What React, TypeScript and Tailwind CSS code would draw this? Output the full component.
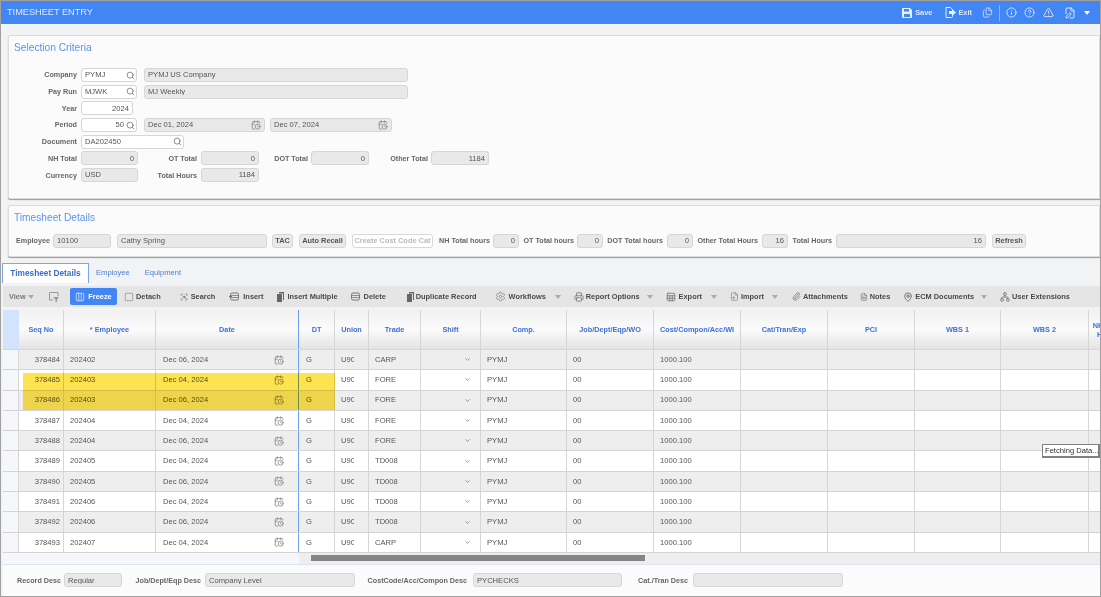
import React from 'react';
import {
  Files, Info, CircleHelp, TriangleAlert, FilePen, Search, CalendarClock, ChevronDown,
  Columns3, SquareDashed, ScanSearch, Settings, Printer, Sheet, FileInput, Paperclip, FileText,
  MapPin, Network,
} from 'lucide-react';

const Caret = ({ className = 'text-[#999]' }: { className?: string }) => (
  <svg width="6" height="4" viewBox="0 0 6 4" className={`shrink-0 ${className}`}>
    <path d="M0 0h6L3 4z" fill="currentColor" />
  </svg>
);

const SaveSolid = () => (
  <svg width="10" height="10" viewBox="0 0 10 10" className="shrink-0">
    <path d="M0 1a1 1 0 0 1 1-1h7l2 2v7a1 1 0 0 1-1 1H1a1 1 0 0 1-1-1z" fill="#e6efff" />
    <path d="M2 1h5v2.500H2zM2 6h6v3H2z" fill="#4286f4" />
  </svg>
);

const ExitDoc = () => (
  <svg width="11" height="11" viewBox="0 0 11 11" className="shrink-0">
    <path d="M1 .5h4.500L7.500 2.500V9.500a1 1 0 0 1-1 1H1z" fill="none" stroke="#e6efff" />
    <path d="M4 4h3V2l4 3.500-4 3.500V7H4z" fill="#e6efff" />
  </svg>
);

const FilterBox = () => (
  <svg width="10" height="10" viewBox="0 0 10 10" className="shrink-0 ml-[15px] text-[#999]">
    <path d="M9 4V.5H.5V8H4" fill="none" stroke="currentColor" />
    <path d="M4 5h6L8 7.500V10H6.500V7.500z" fill="currentColor" />
  </svg>
);

// row insert / delete glyph from the toolbar
const RowIcon = ({ arrow }: { arrow?: boolean }) => (
  <svg width="10" height="9" viewBox="0 0 10 9" className="shrink-0 text-[#777]">
    <rect x="1.500" y="1" width="8" height="7" rx="1.500" fill="none" stroke="currentColor" />
    <path d="M1.500 3.500h8M1.500 5.500h8" stroke="currentColor" strokeWidth="0.8" />
    {arrow && <path d="M0 4.500h3" stroke="currentColor" strokeWidth="1.400" />}
  </svg>
);

const DocFilled = () => (
  <svg width="7" height="10" viewBox="0 0 7 10" className="shrink-0 text-[#666]">
    <path d="M2 0h5v8H6V1.500H2zM0 2h5v8H0z" fill="currentColor" />
  </svg>
);

const Label = ({ w, children }: { w: string; children: React.ReactNode }) => (
  <span className={`${w} shrink-0 text-right text-[7.2px] font-bold text-[#666] whitespace-nowrap`}>{children}</span>
);

const Field = ({
  w,
  value,
  right,
  light,
  icon,
  className = '',
}: {
  w: string;
  value?: string;
  right?: boolean;
  light?: boolean;
  icon?: 'search' | 'cal';
  className?: string;
}) => (
  <div
    className={`${w} ${className} h-[14px] shrink-0 flex items-center px-[3px] rounded-[3px] border border-[#d6d6d6] text-[#555] ${
      light ? 'bg-white' : 'bg-[#e9e9e9]'
    }`}
  >
    <span className={`flex-1 whitespace-nowrap overflow-hidden ${right ? 'text-right' : ''}`}>{value}</span>
    {icon === 'search' && <Search size={9} className="ml-[2px] -mr-[2px] shrink-0 text-[#777]" strokeWidth={2.2} />}
    {icon === 'cal' && <CalendarClock size={10} className="ml-[2px] shrink-0 text-[#888]" />}
  </div>
);

const Btn = ({ w, children, dim }: { w: string; children: React.ReactNode; dim?: boolean }) => (
  <div
    className={`${w} h-[14px] shrink-0 flex items-center justify-center rounded-[3px] border text-[7.4px] font-bold whitespace-nowrap ${
      dim ? 'bg-white border-[#d9d9d9] text-[#bbb]' : 'bg-[#eaeaea] border-[#d6d6d6] text-[#555]'
    }`}
  >
    {children}
  </div>
);

const tools = [
  { label: 'Detach', ml: 'ml-[7px]', gap: 'gap-[2px]', icon: <SquareDashed size={10} className="shrink-0 text-[#666]" /> },
  { label: 'Search', ml: 'ml-[19px]', gap: 'gap-[3px]', icon: <ScanSearch size={8} className="shrink-0 text-[#666]" /> },
  { label: 'Insert', ml: 'ml-[14px]', gap: 'gap-[4px]', icon: <RowIcon arrow /> },
  { label: 'Insert Multiple', ml: 'ml-[14px]', gap: 'gap-[3px]', icon: <DocFilled /> },
  { label: 'Delete', ml: 'ml-[12px]', gap: 'gap-[4px]', icon: <RowIcon /> },
  { label: 'Duplicate Record', ml: 'ml-[21px]', gap: 'gap-[2px]', icon: <DocFilled /> },
  { label: 'Workflows', ml: 'ml-[18px]', gap: 'gap-[3px]', icon: <Settings size={11} className="shrink-0 text-[#999]" />, caret: 'ml-[9px]' },
  { label: 'Report Options', ml: 'ml-[13px]', gap: 'gap-[2px]', icon: <Printer size={10} className="shrink-0 text-[#777]" />, caret: 'ml-[7px]' },
  { label: 'Export', ml: 'ml-[13px]', gap: 'gap-[3px]', icon: <Sheet size={10} className="shrink-0 text-[#777]" />, caret: 'ml-[9px]' },
  { label: 'Import', ml: 'ml-[13px]', gap: 'gap-[2px]', icon: <FileInput size={9} className="shrink-0 text-[#888]" />, caret: 'ml-[8px]' },
  { label: 'Attachments', ml: 'ml-[14px]', gap: 'gap-[2px]', icon: <Paperclip size={9} className="shrink-0 text-[#777]" /> },
  { label: 'Notes', ml: 'ml-[12px]', gap: 'gap-[2px]', icon: <FileText size={8} className="shrink-0 text-[#777]" /> },
  { label: 'ECM Documents', ml: 'ml-[13px]', gap: 'gap-[2px]', icon: <MapPin size={10} className="shrink-0 text-[#666]" />, caret: 'ml-[7px]' },
  { label: 'User Extensions', ml: 'ml-[13px]', gap: 'gap-[2px]', icon: <Network size={10} className="shrink-0 text-[#777]" /> },
];

const gridCols =
  'grid grid-cols-[16px_45px_92px_143px_36px_34px_52px_60px_86px_87px_87px_87px_87px_86px_88px_38px]';

const headers = [
  '', 'Seq No', '* Employee', 'Date', 'DT', 'Union', 'Trade', 'Shift', 'Comp.', 'Job/Dept/Eqp/WO',
  'Cost/Compon/Acc/WI', 'Cat/Tran/Exp', 'PCI', 'WBS 1', 'WBS 2', 'NH Total Hours',
];

const rows = [
  ['378484', '202402', 'Dec 06, 2024', 'CARP'],
  ['378485', '202403', 'Dec 04, 2024', 'FORE'],
  ['378486', '202403', 'Dec 06, 2024', 'FORE'],
  ['378487', '202404', 'Dec 04, 2024', 'FORE'],
  ['378488', '202404', 'Dec 06, 2024', 'FORE'],
  ['378489', '202405', 'Dec 04, 2024', 'TD008'],
  ['378490', '202405', 'Dec 06, 2024', 'TD008'],
  ['378491', '202406', 'Dec 04, 2024', 'TD008'],
  ['378492', '202406', 'Dec 06, 2024', 'TD008'],
  ['378493', '202407', 'Dec 04, 2024', 'CARP'],
];

const cell = 'flex items-center overflow-hidden border-r border-[#d6d6d6] whitespace-nowrap';

const App: React.FC = () => {
  return (
    <div className="relative w-[1101px] h-[597px] overflow-hidden flex flex-col bg-[#f2f3f4] border-t border-l border-r border-b border-[#a0a0a0] font-['Liberation_Sans',Arial,sans-serif] text-[7.6px] leading-none">
      {/* Title bar */}
      <div className="h-[23px] shrink-0 flex items-center bg-[#4286f4] text-white">
        <span className="ml-[6px] text-[9.2px] text-[#dbe8ff]">TIMESHEET ENTRY</span>
        <div className="ml-auto flex items-center text-[7.4px] font-bold text-[#dbe8ff]">
          <SaveSolid />
          <span className="ml-[3px]">Save</span>
          <span className="ml-[13px]"><ExitDoc /></span>
          <span className="ml-[2px]">Exit</span>
          <Files size={11} className="ml-[10px] text-[#c5d9fa]" />
          <div className="ml-[6px] w-px h-[16px] bg-[#8db5f8]" />
          <Info size={11} className="ml-[6px]" />
          <CircleHelp size={11} className="ml-[7px]" />
          <TriangleAlert size={11} className="ml-[8px]" />
          <FilePen size={12} className="ml-[10px]" />
          <Caret className="ml-[8px] mr-[10px] text-white" />
        </div>
      </div>

      {/* Selection Criteria */}
      <div className="ml-[7px] mt-[11px] h-[164px] shrink-0 bg-[#fbfbfb] border border-[#dcdcdc] rounded-l-[2px] shadow-[0_1px_1px_#999] pt-[5px]">
        <h2 className="ml-[5px] h-[14px] text-[10.2px] leading-[14px] text-[#5c93ee]">Selection Criteria</h2>
        <div className="mt-[13px] flex flex-col gap-y-[2.7px]">
          <div className="flex items-center">
            <Label w="w-[68px]">Company</Label>
            <Field w="w-[56px]" light value="PYMJ" icon="search" className="ml-[4px]" />
            <Field w="w-[264px]" value="PYMJ US Company" className="ml-[7px]" />
          </div>
          <div className="flex items-center">
            <Label w="w-[68px]">Pay Run</Label>
            <Field w="w-[56px]" light value="MJWK" icon="search" className="ml-[4px]" />
            <Field w="w-[264px]" value="MJ Weekly" className="ml-[7px]" />
          </div>
          <div className="flex items-center">
            <Label w="w-[68px]">Year</Label>
            <Field w="w-[52px]" light right value="2024" className="ml-[4px]" />
          </div>
          <div className="flex items-center">
            <Label w="w-[68px]">Period</Label>
            <Field w="w-[56px]" light right value="50" icon="search" className="ml-[4px]" />
            <Field w="w-[121px]" value="Dec 01, 2024" icon="cal" className="ml-[7px]" />
            <Field w="w-[122px]" value="Dec 07, 2024" icon="cal" className="ml-[5px]" />
          </div>
          <div className="flex items-center">
            <Label w="w-[68px]">Document</Label>
            <Field w="w-[103px]" light value="DA202450" icon="search" className="ml-[4px]" />
          </div>
          <div className="flex items-center">
            <Label w="w-[68px]">NH Total</Label>
            <Field w="w-[57px]" right value="0" className="ml-[4px]" />
            <Label w="w-[59px]">OT Total</Label>
            <Field w="w-[58px]" right value="0" className="ml-[4px]" />
            <Label w="w-[49px]">DOT Total</Label>
            <Field w="w-[58px]" right value="0" className="ml-[3px]" />
            <Label w="w-[59px]">Other Total</Label>
            <Field w="w-[58px]" right value="1184" className="ml-[3px]" />
          </div>
          <div className="flex items-center">
            <Label w="w-[68px]">Currency</Label>
            <Field w="w-[57px]" value="USD" className="ml-[4px]" />
            <Label w="w-[59px]">Total Hours</Label>
            <Field w="w-[58px]" right value="1184" className="ml-[4px]" />
          </div>
        </div>
      </div>

      {/* Timesheet Details */}
      <div className="ml-[7px] mt-[6px] h-[52px] shrink-0 bg-[#fbfbfb] border border-[#dcdcdc] rounded-l-[2px] shadow-[0_1px_1px_#999] pt-[5px]">
        <h2 className="ml-[5px] h-[14px] text-[10.2px] leading-[14px] text-[#5c93ee]">Timesheet Details</h2>
        <div className="mt-[9px] flex items-center pl-[6px]">
          <Label w="w-[35px]">Employee</Label>
          <Field w="w-[58px]" value="10100" className="ml-[3px]" />
          <Field w="w-[150px]" value="Cathy Spring" className="ml-[6px]" />
          <div className="ml-[5px]"><Btn w="w-[21px]">TAC</Btn></div>
          <div className="ml-[6px]"><Btn w="w-[47px]">Auto Recall</Btn></div>
          <div className="ml-[6px]"><Btn w="w-[81px]" dim>Create Cost Code Cat</Btn></div>
          <Label w="w-[57px]">NH Total hours</Label>
          <Field w="w-[26px]" right value="0" className="ml-[3px]" />
          <Label w="w-[55px]">OT Total hours</Label>
          <Field w="w-[26px]" right value="0" className="ml-[3px]" />
          <Label w="w-[60px]">DOT Total hours</Label>
          <Field w="w-[26px]" right value="0" className="ml-[4px]" />
          <Label w="w-[65px]">Other Total Hours</Label>
          <Field w="w-[26px]" right value="16" className="ml-[4px]" />
          <Label w="w-[44px]">Total Hours</Label>
          <Field w="w-[150px]" right value="16" className="ml-[4px]" />
          <div className="ml-[6px]"><Btn w="w-[34px]">Refresh</Btn></div>
        </div>
      </div>

      {/* Tabs */}
      <div className="ml-[1px] mt-[6px] h-[20px] shrink-0 flex items-stretch text-[7.6px]">
        <div className="w-[87px] flex items-center justify-center bg-white border-t border-x border-[#7aa7ee] text-[8.3px] font-bold text-[#3a6fc8]">
          Timesheet Details
        </div>
        <span className="ml-[7px] flex items-center text-[#4a7fd4]">Employee</span>
        <span className="ml-[15px] flex items-center text-[#4a7fd4]">Equipment</span>
      </div>

      {/* Toolbar */}
      <div className="ml-[2px] mt-[3px] h-[21px] shrink-0 flex items-center bg-[#e5e5e5] text-[#4a4a4a] text-[7.4px] font-bold pl-[6px] whitespace-nowrap">
        <span className="shrink-0 w-[16px] text-[#777]">View</span>
        <Caret className="ml-[3px] text-[#aaa]" />
        <FilterBox />
        <div className="ml-[11px] w-[47px] h-[17px] shrink-0 flex items-center justify-center gap-[3px] rounded-[2px] bg-[#4286f4] text-white">
          <Columns3 size={10} className="shrink-0 text-[#cfe0fc]" />
          Freeze
        </div>
        {tools.map((t) => (
          <React.Fragment key={t.label}>
            <div className={`${t.ml} ${t.gap} shrink-0 flex items-center`}>
              {t.icon}
              <span>{t.label}</span>
            </div>
            {t.caret && <Caret className={`${t.caret} text-[#aaa]`} />}
          </React.Fragment>
        ))}
      </div>

      {/* Table */}
      <div className="ml-[2px] mt-[3px] flex-1 flex flex-col overflow-hidden">
        <div className={`${gridCols} h-[40px] shrink-0 border-b border-[#d6d6d6]`}>
          {headers.map((h, i) => (
            <div
              key={i}
              className={`flex items-center justify-center text-center text-[7.3px] leading-[9px] font-bold text-[#3b71d8] border-r ${
                i === 0
                  ? 'bg-[#d3e3fb] border-r-[#d3e3fb]'
                  : `bg-gradient-to-b from-[#f1f1f1] via-[#fbfbfb] to-[#e3e3e3] ${i === 3 ? 'border-r-[#6a9ff0]' : 'border-r-[#d6d6d6]'}`
              }`}
            >
              {h}
            </div>
          ))}
        </div>
        <div className="relative">
          {rows.map((r, i) => (
            <div
              key={r[0]}
              className={`${gridCols} h-[20.3px] border-b border-[#d4d4d4] text-[#555] ${
                i % 2 === 0 ? 'bg-[#eeeeee]' : 'bg-white'
              }`}
            >
              <div className={`${cell} bg-[#f5f7fc]`} />
              <div className={`${cell} justify-end pr-[3px]`}>{r[0]}</div>
              <div className={`${cell} pl-[6px]`}>{r[1]}</div>
              <div className="flex items-center justify-between pl-[7px] pr-[14px] border-r border-r-[#6a9ff0] whitespace-nowrap">
                <span>{r[2]}</span>
                <CalendarClock size={10} className="shrink-0 text-[#888]" />
              </div>
              <div className={`${cell} pl-[7px]`}>G</div>
              <div className={`${cell} pl-[6px]`}>
                <span className="w-[13px] overflow-hidden">U9000</span>
              </div>
              <div className={`${cell} pl-[6px]`}>{r[3]}</div>
              <div className={`${cell} justify-end pr-[9px]`}>
                <ChevronDown size={7} className="shrink-0 text-[#777]" strokeWidth={2.5} />
              </div>
              <div className={`${cell} pl-[6px]`}>PYMJ</div>
              <div className={`${cell} pl-[6px]`}>00</div>
              <div className={`${cell} pl-[6px]`}>1000.100</div>
              <div className={cell} />
              <div className={cell} />
              <div className={cell} />
              <div className={cell} />
              <div className={cell} />
            </div>
          ))}
          {/* Yellow markup over rows 378485 and 378486 */}
          <div className="absolute left-[20px] top-[22.5px] w-[312px] h-[37px] bg-[#fee350] mix-blend-multiply" />
        </div>

        {/* Horizontal scrollbar */}
        <div className="h-[12px] shrink-0 flex border-b border-[#dbe4f3]">
          <div className="w-[296px] bg-[#f6f7fb]" />
          <div className="flex-1 flex items-center pl-[12px] bg-[#eeeeee]">
            <div className="w-[334px] h-[6px] bg-[#858585]" />
          </div>
        </div>

        {/* Description fields */}
        <div className="flex-1 flex items-center bg-[#fbfbfb] pl-[13px]">
          <Label w="w-[45px]">Record Desc</Label>
          <Field w="w-[58px]" value="Regular" className="ml-[3px]" />
          <Label w="w-[79px]">Job/Dept/Eqp Desc</Label>
          <Field w="w-[150px]" value="Company Level" className="ml-[4px]" />
          <Label w="w-[112px]">CostCode/Acc/Compon Desc</Label>
          <Field w="w-[149px]" value="PYCHECKS" className="ml-[6px]" />
          <Label w="w-[66px]">Cat./Tran Desc</Label>
          <Field w="w-[150px]" className="ml-[5px]" />
        </div>
      </div>

      {/* Tooltip */}
      <div className="absolute right-0 top-[443px] w-[58px] h-[14px] flex items-center pl-[2px] bg-white border-t border-l border-r-2 border-b-2 border-[#808080] text-[#333] whitespace-nowrap overflow-hidden">
        Fetching Data...
      </div>
    </div>
  );
};

export default App;
